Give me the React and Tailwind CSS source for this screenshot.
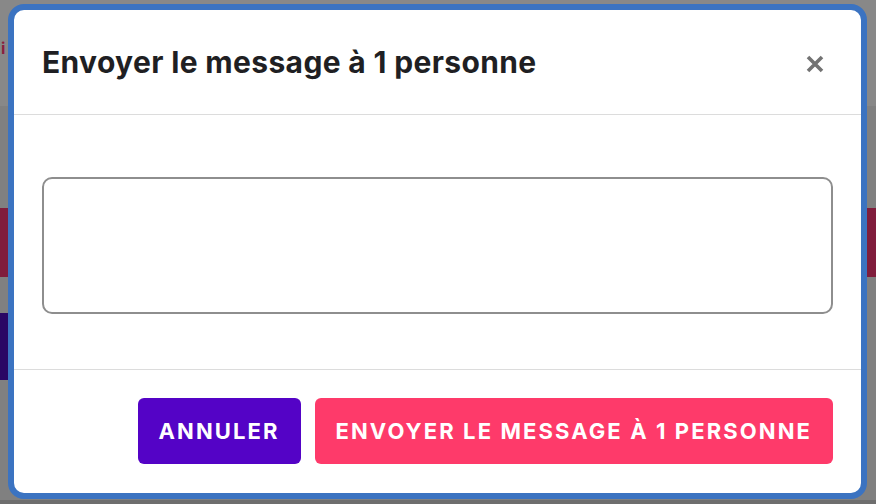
import React from 'react';

function CloseIcon() {
  return (
    <svg width="18" height="18" viewBox="0 0 18 18" fill="none">
      <path d="M2 2L16 16M16 2L2 16" stroke="#737373" strokeWidth="3.6" strokeLinecap="butt" />
    </svg>
  );
}

export default function App() {
  return (
    <div className="relative w-[876px] h-[504px] overflow-hidden bg-[#808080]" style={{ fontFamily: 'Inter, "Noto Sans", sans-serif' }}>
      {/* page behind the overlay */}
      <div className="flex flex-col h-full">
        <div className="h-[106px] bg-[#888888] flex items-start pt-[40px] pl-[1px]">
          <span className="text-[16px] font-bold text-[#8a1f3e] leading-none">i</span>
        </div>
        <div className="h-[102px]" />
        <div className="h-[69px] bg-[#801d3c]" />
        <div className="h-[36px]" />
        <div className="h-[67px] w-[14px] bg-[#2a0764]" />
        <div className="flex-1" />
        <div className="h-[4px] bg-[#6e6e6e]" />
      </div>

      {/* modal */}
      <div className="absolute left-[8px] top-[4px] w-[859px] h-[495px] rounded-[16px] border-[6px] border-[#3b73c1] bg-white flex flex-col overflow-hidden">
        <div className="h-[105px] flex items-center justify-between pl-[28px] pr-[37px] border-b border-[#dcdcdc] shrink-0">
          <h2 className="text-[30px] font-bold text-[#1f1f23] tracking-[0.35px]">Envoyer le message à 1 personne</h2>
          <button className="mt-[4px]"><CloseIcon /></button>
        </div>
        <div className="pt-[62px] pb-[55px] px-[28px] border-b border-[#dcdcdc] shrink-0">
          <textarea className="block w-full h-[137px] rounded-[10px] border-2 border-[#8e8e8e] resize-none outline-none" />
        </div>
        <div className="flex justify-end gap-[14px] pt-[28px] pr-[28px]">
          <button className="h-[66px] px-[21px] rounded-[6px] bg-[#5403c6] text-white text-[22px] font-bold tracking-[2.1px]">ANNULER</button>
          <button className="h-[66px] px-[21px] rounded-[6px] bg-[#fe3a6a] text-white text-[22px] font-bold tracking-[2.1px]">ENVOYER LE MESSAGE À 1 PERSONNE</button>
        </div>
      </div>
    </div>
  );
}
